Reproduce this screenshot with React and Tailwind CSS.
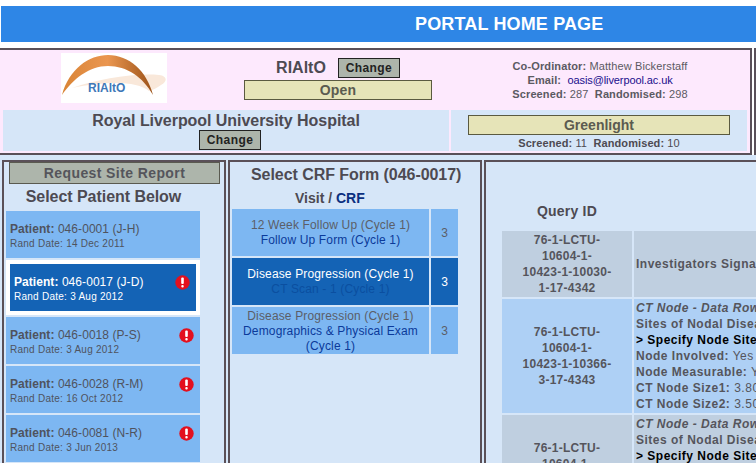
import React from 'react';

const PATIENTS = [
  { id: '046-0001 (J-H)', date: '14 Dec 2011', flag: false },
  { id: '046-0017 (J-D)', date: '3 Aug 2012', flag: true, active: true },
  { id: '046-0018 (P-S)', date: '3 Aug 2012', flag: true },
  { id: '046-0028 (R-M)', date: '16 Oct 2012', flag: true },
  { id: '046-0081 (N-R)', date: '3 Jun 2013', flag: true },
];

const FORMS = [
  { visit: '12 Week Follow Up (Cycle 1)', crf: 'Follow Up Form (Cycle 1)' },
  { visit: 'Disease Progression (Cycle 1)', crf: 'CT Scan - 1 (Cycle 1)', active: true },
  { visit: 'Disease Progression (Cycle 1)', crf: 'Demographics & Physical Exam (Cycle 1)' },
];

const Logo = () => (
  <svg width="106" height="50" viewBox="0 0 106 50" className="block">
    <defs>
      <linearGradient id="arc" x1="0" x2="1" y1="0" y2="0">
        <stop offset="0" stopColor="#d98436" />
        <stop offset="0.5" stopColor="#ea9650" />
        <stop offset="1" stopColor="#9c5218" />
      </linearGradient>
    </defs>
    <rect width="106" height="50" fill="#ffffff" />
    <path d="M11 35 C38 26 72 20 98 22 C106 23 107 28 100 32 C96 35 92 37 88 38 C76 28 46 28 11 35 Z" fill="#f9e8da" />
    <path d="M1 42 C8 16 28 2 47 2 C68 2 86 18 92 42 C82 24 66 13 47 13 C28 13 12 26 1 42 Z" fill="url(#arc)" />
    <text x="27" y="39" fontFamily="Liberation Sans, sans-serif" fontSize="12" fontWeight="700" fill="#3f78b8">RIAltO</text>
  </svg>
);

const Flag = () => (
  <svg width="15" height="15" viewBox="0 0 15 15" className="shrink-0 self-start mt-[11px]">
    <circle cx="7.5" cy="7.5" r="7.2" fill="#e3101e" />
    <rect x="6.2" y="2.6" width="2.6" height="6.4" rx="1" fill="#ffffff" />
    <rect x="6.3" y="10" width="2.4" height="2.4" rx="1" fill="#ffffff" />
  </svg>
);

const ChangeButton = ({ className = '' }) => (
  <button className={`w-[62px] h-[20px] bg-[#adb5ab] border border-[#222222] text-[12px] font-bold tracking-[0.4px] text-[#222222] leading-none ${className}`}>
    Change
  </button>
);

const PatientRow = ({ p }) => (
  <div className={p.active ? 'bg-white p-[4px] h-[55px] w-[194px]' : 'w-[194px] h-[47px] bg-[#7db7f2]'}>
    <div className={`h-[47px] flex items-center justify-between pr-[6px] ${p.active ? 'bg-[#1463b5] text-white pl-[4px]' : 'pl-[4px] text-[#4f535e]'}`}>
      <div className="pt-[2px]">
        <div className="text-[12px] leading-[15px] tracking-[0.06px]"><b>Patient:</b> {p.id}</div>
        <div className="text-[10px] leading-[13px] tracking-[0.25px]">Rand Date: {p.date}</div>
      </div>
      {p.flag && <Flag />}
    </div>
  </div>
);

const FormRow = ({ f }) => (
  <div className={`flex gap-[2px] h-[47px] ${f.active ? 'text-white' : 'text-[#5b5e68]'}`}>
    <div className={`w-[197px] pt-[1px] flex flex-col justify-center text-center text-[12px] leading-[15px] tracking-[0.15px] px-[2px] ${f.active ? 'bg-[#1463b5]' : 'bg-[#7db7f2]'}`}>
      <div>{f.visit}</div>
      <div className={f.active ? 'text-[#0b4fa0]' : 'text-[#0b3a9a]'}>{f.crf}</div>
    </div>
    <div className={`w-[27px] pt-[1px] flex items-center justify-center text-[12px] ${f.active ? 'bg-[#1463b5]' : 'bg-[#7db7f2]'}`}>3</div>
  </div>
);

const QueryId = ({ lines, className }) => (
  <div className={`w-[130px] flex flex-col items-center justify-center text-center font-bold tracking-[0.25px] ${className}`}>
    {lines.map((l) => <div key={l}>{l}</div>)}
  </div>
);

const NodeDetail = () => (
  <>
    <div className="italic font-bold">CT Node - Data Row 1</div>
    <div className="font-bold">Sites of Nodal Disease</div>
    <div className="font-bold text-black">&gt; Specify Node Site</div>
    <div><b>Node Involved:</b> Yes</div>
    <div><b>Node Measurable:</b> Yes</div>
    <div><b>CT Node Size1:</b> 3.80</div>
    <div><b>CT Node Size2:</b> 3.50</div>
  </>
);

export default function App() {
  return (
    <div className="w-[756px] h-[463px] overflow-hidden bg-[#d6e6f8] text-[#4d4a52] font-['Liberation_Sans',Arial,sans-serif]">
      {/* top part on white */}
      <div className="bg-white pt-[6px] h-[155px]">
        <div className="ml-[1px] h-[36px] bg-[#2e86e6] pl-[414px] pt-[1px] flex items-center text-white text-[18px] font-bold tracking-[0.15px]">
          PORTAL HOME PAGE
        </div>
        <div className="mt-[6px] flex gap-[2px] w-[800px]">
          <div className="w-[752px] h-[107px] border-2 border-l-0 border-[#5a5058] bg-[#fde9fd] pl-[3px] pt-[3px]">
            <div className="flex h-[55px]">
              <div className="w-[232px] pl-[58px]"><Logo /></div>
              <div className="w-[206px] flex flex-col items-center pt-[5px]">
                <div className="flex items-center h-[20px]">
                  <span className="text-[16px] font-bold mr-[12px]">RIAltO</span>
                  <ChangeButton />
                </div>
                <div className="mt-[2px] w-[188px] h-[20px] bg-[#e6e4b8] border border-[#5a5a40] flex items-center justify-center text-[14px] font-bold text-[#5b5b50] tracking-[0.2px]">
                  Open
                </div>
              </div>
              <div className="flex-1 text-center text-[11px] leading-[14px] tracking-[0.12px] pt-[6px] pl-[9px] text-[#5b5a62]">
                <div><b>Co-Ordinator:</b> Matthew Bickerstaff</div>
                <div><b>Email:</b>&nbsp; <span className="text-[#1a0f8c] tracking-[-0.1px]">oasis@liverpool.ac.uk</span></div>
                <div><b>Screened:</b> 287&nbsp; <b>Randomised:</b> 298</div>
              </div>
            </div>
            <div className="flex gap-[2px] mt-[2px] h-[41px]">
              <div className="w-[446px] bg-[#d6e6f8] flex flex-col items-center pt-[1px]">
                <div className="text-[16px] font-bold leading-[19px] tracking-[-0.05px]">Royal Liverpool University Hospital</div>
                <ChangeButton className="ml-[8px]" />
              </div>
              <div className="w-[296px] bg-[#d6e6f8] flex flex-col items-center pt-[5px]">
                <div className="w-[262px] h-[20px] bg-[#e6e4b8] border border-[#5a5a40] flex items-center justify-center text-[14px] font-bold text-[#5b5b50]">
                  Greenlight
                </div>
                <div className="text-[11px] leading-[14px] mt-[1px] tracking-[0.1px]"><b>Screened:</b> 11&nbsp; <b>Randomised:</b> 10</div>
              </div>
            </div>
          </div>
          <div className="w-[40px] h-[107px] border-2 border-[#5a5058] bg-[#fde9fd]" />
        </div>
      </div>

      {/* three columns */}
      <div className="flex pl-[2px] pt-[5px] gap-[2px] w-[900px]">
        {/* patients */}
        <div className="w-[224px] h-[320px] border-2 border-[#5a5058] pl-[2px] shrink-0">
          <div className="ml-[3px] w-[211px] h-[22px] bg-[#adb5ab] border border-[#5a5a50] flex items-center justify-center text-[14px] font-bold tracking-[0.4px] text-[#55555c]">
            Request Site Report
          </div>
          <div className="w-[195px] text-center text-[16px] font-bold leading-[24px] tracking-[-0.05px] mt-[1px] mb-[2px]">Select Patient Below</div>
          <div className="flex flex-col gap-[2px]">
            {PATIENTS.map((p) => <PatientRow key={p.id} p={p} />)}
          </div>
        </div>

        {/* CRF forms */}
        <div className="w-[254px] h-[320px] border-2 border-[#5a5058] pl-[2px] shrink-0">
          <div className="pl-[19px] text-[16px] font-bold leading-[24px] tracking-[-0.05px] pt-[1px]">Select CRF Form (046-0017)</div>
          <div className="pl-[63px] text-[14px] font-bold leading-[22px]">Visit / <span className="text-[#0b2f80]">CRF</span></div>
          <div className="flex flex-col gap-[2px]">
            {FORMS.map((f) => <FormRow key={f.crf} f={f} />)}
          </div>
        </div>

        {/* queries */}
        <div className="w-[400px] h-[320px] border-t-2 border-l-2 border-[#5a5058] pl-[16px] shrink-0">
          <div className="w-[130px] h-[69px] pt-[39px] text-center text-[14px] font-bold leading-[20px] tracking-[0.2px]">Query ID</div>
          <div className="flex flex-col gap-[2px] text-[12px] leading-[16px] tracking-[0.5px] text-[#55555c]">
            <div className="flex gap-[2px] h-[66px]">
              <QueryId className="bg-[#bfcfe0]" lines={['76-1-LCTU-', '10604-1-', '10423-1-10030-', '1-17-4342']} />
              <div className="w-[250px] bg-[#bfcfe0] flex items-center pl-[2px] font-bold">Investigators Signature</div>
            </div>
            <div className="flex gap-[2px] h-[114px]">
              <QueryId className="bg-[#aed0f5]" lines={['76-1-LCTU-', '10604-1-', '10423-1-10366-', '3-17-4343']} />
              <div className="w-[250px] bg-[#aed0f5] pl-[2px] pt-[1px]"><NodeDetail /></div>
            </div>
            <div className="flex gap-[2px] h-[114px]">
              <QueryId className="bg-[#bfcfe0]" lines={['76-1-LCTU-', '10604-1-', '10423-1-10367-', '3-17-4344']} />
              <div className="w-[250px] bg-[#bfcfe0] pl-[2px] pt-[1px]"><NodeDetail /></div>
            </div>
          </div>
        </div>
      </div>
    </div>
  );
}
